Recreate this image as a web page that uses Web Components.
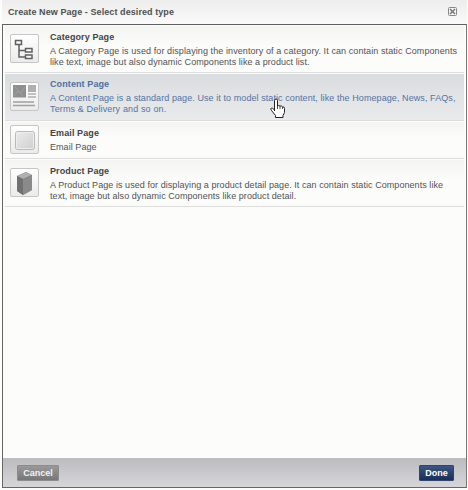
<!DOCTYPE html>
<html lang="en"><head><meta charset="utf-8"><title>Create New Page</title>
<style>
body{margin:0;width:468px;height:490px;overflow:hidden;background:#fcfcfb;font-family:"Liberation Sans",Arial,sans-serif}
</style></head><body>
<page-dialog heading="Create New Page - Select desired type">
<page-option icon="tree" heading="Category Page"><text-line style="letter-spacing:.09px">A Category Page is used for displaying the inventory of a category. It can contain static Components</text-line><text-line>like text, image but also dynamic Components like a product list.</text-line></page-option>
<page-option icon="content" selected heading="Content Page"><text-line style="letter-spacing:.08px">A Content Page is a standard page. Use it to model static content, like the Homepage, News, FAQs,</text-line><text-line style="letter-spacing:.14px">Terms &amp; Delivery and so on.</text-line></page-option>
<page-option icon="mail" heading="Email Page"><text-line>Email Page</text-line></page-option>
<page-option icon="box" heading="Product Page"><text-line>A Product Page is used for displaying a product detail page. It can contain static Components like</text-line><text-line>text, image but also dynamic Components like product detail.</text-line></page-option>
<action-button slot="actions">Cancel</action-button>
<action-button slot="actions" primary>Done</action-button>
</page-dialog>
<hand-cursor></hand-cursor>
<script>
const icons={
tree:'<g fill="#f8f8f8" stroke="#606060" stroke-width="1.500"><path d="M8 9v13h6M8 15.500h6" fill="none"/><rect x="4.500" y="5.500" width="6" height="4"/><rect x="14.500" y="13.500" width="6.500" height="3.500"/><rect x="14.500" y="20" width="6.500" height="3.500"/></g>',
content:'<rect x="2" y="2" width="13" height="12.500" fill="#8f8f8f"/><path d="M3 13l4-5 3 2 4-6M4 4l8 9" stroke="#a0a0a0" fill="none"/><path d="M17 2h8v7h-8z" fill="#b0b0b0"/><path d="M17 11h8M17 14h8" stroke="#b0b0b0" stroke-width="1.500"/><path d="M2 19h21M2 22.500h22" stroke="#a0a0a0" stroke-width="1.500"/>',
mail:'<defs><linearGradient id="m" x2="1" y2="1"><stop stop-color="#ececec"/><stop offset="1" stop-color="#cecece"/></linearGradient></defs><rect x="4.500" y="5.500" width="19" height="18" rx="2" fill="url(#m)" stroke="#bababa"/><rect x="5.500" y="6.500" width="17" height="16" rx="1" fill="none" stroke="#eee"/>',
box:'<path d="M6 7l9-4 6 3v15l-9 5-6-4z" fill="#777"/><path d="M6 7l9-4 6 3-9 4z" fill="#b0b0b0"/><path d="M12 10l9-4v15l-9 5z" fill="#8a8a8a"/><path d="M6 7l6 3v16l-6-4z" fill="#707070"/>'};
const define=(name,render)=>customElements.define(name,class extends HTMLElement{
connectedCallback(){if(!this.shadowRoot)this.attachShadow({mode:'open'}).innerHTML=render(this)}});
define('text-line',()=>`<style>:host{display:block;white-space:nowrap}</style><slot></slot>`);
define('option-icon',e=>`<style>:host{display:block;box-sizing:border-box;flex:none;width:29px;height:29px;border:1px solid #c6c6c6;border-radius:2px;background:linear-gradient(#fff,#ebebeb)}svg{display:block;width:27px;height:27px}</style><svg viewBox="0 0 27 27">${icons[e.getAttribute('name')]}</svg>`);
define('page-option',e=>`<style>
:host{display:flex;box-sizing:border-box;height:47px;padding:8px 0 0 5px;gap:11px;background:linear-gradient(#f4f4f3,#fcfcfb 45%);border-bottom:1px solid #dedede;color:#505254;font-size:9px;line-height:11px;letter-spacing:.06px}
:host([icon=mail]){height:37px;padding-top:3px}
:host([selected]){background:linear-gradient(#dadddf,#e9eaeb);color:#5573a3}
b{display:block;height:13px;line-height:12px;margin-top:-3px;margin-bottom:2px;font-size:9px;letter-spacing:.1px;color:#444}
:host([selected]) b{color:#4f6fa0;margin-top:-4px}
:host([icon=mail]) b{margin-top:2px}
</style><option-icon name="${e.getAttribute('icon')}"></option-icon><div><b>${e.getAttribute('heading')}</b><slot></slot></div>`);
define('action-button',()=>`<style>:host{display:block;box-sizing:border-box;width:42px;height:16px;border:1px solid #8c8c8c;border-radius:1px;background:linear-gradient(#999,#777);color:#f2f2f2;font:bold 9px/15px "Liberation Sans",Arial,sans-serif;text-align:center}
:host([primary]){width:35px;background:linear-gradient(#3c5584,#1a2f58);border-color:#30456d;color:#fff}</style><slot></slot>`);
define('page-dialog',e=>`<style>
:host{display:flex;flex-direction:column;box-sizing:border-box;width:465px;height:488px;margin-left:2px}
header{display:flex;align-items:center;justify-content:space-between;height:24px;flex:none;box-sizing:border-box;padding:0 10px 0 6px;background:linear-gradient(#ededed,#fafafa);color:#505050;font-weight:bold;font-size:9px;letter-spacing:.08px}
svg{display:block;margin-top:-2px}
main{flex:1;display:flex;flex-direction:column;min-height:0;border:1px solid #666;border-top-color:#606060;border-right-color:#777;background:#fcfcfb}
section{flex:1;display:flex;flex-direction:column;gap:1px;padding:1px 2px 0}
footer{height:29px;flex:none;box-sizing:border-box;display:flex;justify-content:space-between;padding:7px 12px 0 14px;background:linear-gradient(#bcbcbf,#d6d6da)}
</style><header><span>${e.getAttribute('heading')}</span><svg width="9" height="9" viewBox="0 0 9 9"><rect x=".5" y=".5" width="8" height="8" rx="1" fill="#f4f4f4" stroke="#888"/><path d="M2 2l5 5M7 2l-5 5" stroke="#777" stroke-width="1.500"/></svg></header><main><section><slot></slot></section><footer><slot name="actions"></slot></footer></main>`);
define('hand-cursor',()=>`<style>:host{position:absolute;left:270px;top:98px;width:16px;height:21px}svg{display:block}</style><svg width="16" height="21" viewBox="0 0 16 21"><path d="M4.500 13V2.500q0-1.500 1.500-1.500t1.500 1.500V8q.5-1 2.500 0 1.500-.5 2.500.8 2-.3 2 1.700v4l-1.500 3v2h-7.500v-2L1.500 12.500q-1.500-2 0-2.500 1-.2 3 2" fill="#fff" stroke="#222"/><path d="M7.500 7v4M10 8v3M12.500 9v2" stroke="#222" stroke-width=".8"/></svg>`);
</script></body></html>
